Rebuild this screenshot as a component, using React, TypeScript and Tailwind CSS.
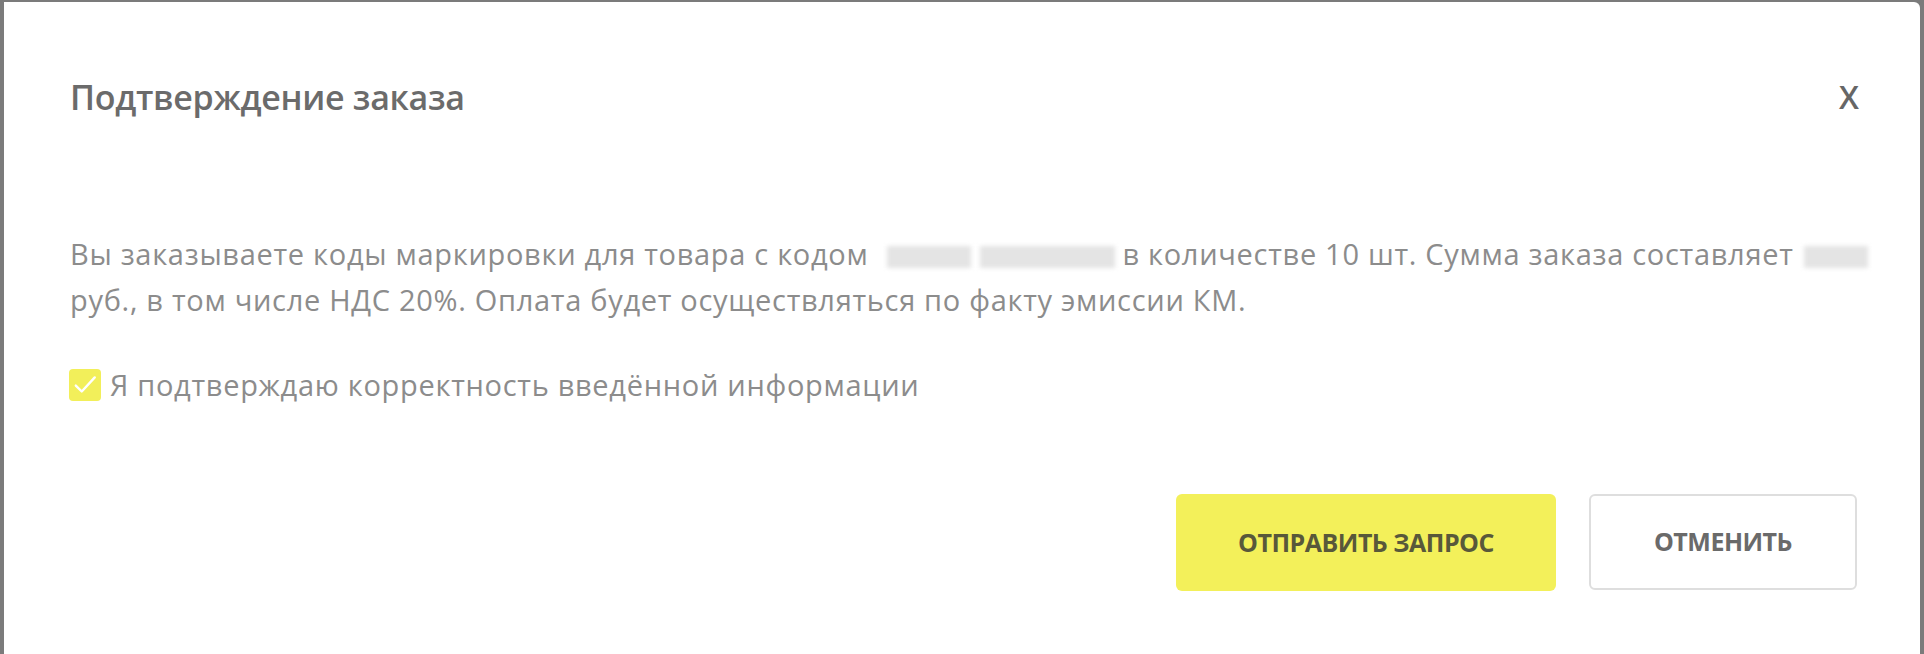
import React, { useState } from 'react';

const Blur: React.FC<{ w: number; className?: string }> = ({ w, className }) => (
  <span
    className={`inline-block h-[22px] align-middle bg-[#e4e4e4] blur-[2px] ${className ?? ''}`}
    style={{ width: w }}
  />
);

const App: React.FC = () => {
  const [checked, setChecked] = useState(true);

  return (
    <div className="w-[1924px] h-[654px] bg-[#7b7b7b] pt-[2px] pl-[4px] pr-[4px] font-['Open_Sans',sans-serif]">
      <div className="h-[652px] bg-white rounded-tr-[6px] pl-[66px] pr-[63px] pt-[73px]">
        {/* header */}
        <div className="flex items-center justify-between h-[44px]">
          <h2 className="text-[34px] font-semibold text-[#6b6b6b] tracking-[-0.3px]">Подтверждение заказа</h2>
          <button className="text-[32px] font-semibold text-[#666666] leading-none mr-[-2px]">X</button>
        </div>

        {/* text */}
        <p className="mt-[112px] text-[29px] leading-[46px] text-[#8c8c8c] tracking-[0.7px]">
          <span className="block whitespace-nowrap">
            Вы заказываете коды маркировки для товара с кодом
            <span className="inline-flex gap-[9px] ml-[19px] mr-[7px] align-middle">
              <Blur w={84} />
              <Blur w={135} />
            </span>
            в количестве 10 шт. Сумма заказа составляет <Blur w={64} className="ml-[2px]" />
          </span>
          <span className="block whitespace-nowrap">
            руб., в том числе НДС 20%. Оплата будет осуществляться по факту эмиссии КМ.
          </span>
        </p>

        {/* confirm checkbox */}
        <label className="mt-[39px] flex items-center gap-[9px] h-[46px] cursor-pointer select-none">
          <span
            onClick={() => setChecked(!checked)}
            className="w-[32px] h-[32px] rounded-[4px] bg-[#f2ef5a] flex items-center justify-center ml-[-1px]"
          >
            {checked && (
              <svg width="26" height="26" viewBox="0 0 24 24" fill="none" stroke="#ffffff" strokeWidth="2.2" strokeLinecap="round" strokeLinejoin="round">
                <path d="M3.5 12.5l5.5 5.5L21 5" />
              </svg>
            )}
          </span>
          <span className="text-[29px] text-[#8c8c8c] tracking-[0.7px]">Я подтверждаю корректность введённой информации</span>
        </label>

        {/* actions */}
        <div className="mt-[86px] flex justify-end gap-[33px]">
          <button className="w-[380px] h-[97px] rounded-[6px] bg-[#f3f05a] text-[25px] font-bold text-[#58583a] tracking-[-0.5px]">
            ОТПРАВИТЬ ЗАПРОС
          </button>
          <button className="w-[268px] h-[96px] rounded-[6px] border-2 border-[#dedede] bg-white text-[25px] font-bold text-[#6a6a6a] tracking-[-0.5px]">
            ОТМЕНИТЬ
          </button>
        </div>
      </div>
    </div>
  );
};

export default App;
